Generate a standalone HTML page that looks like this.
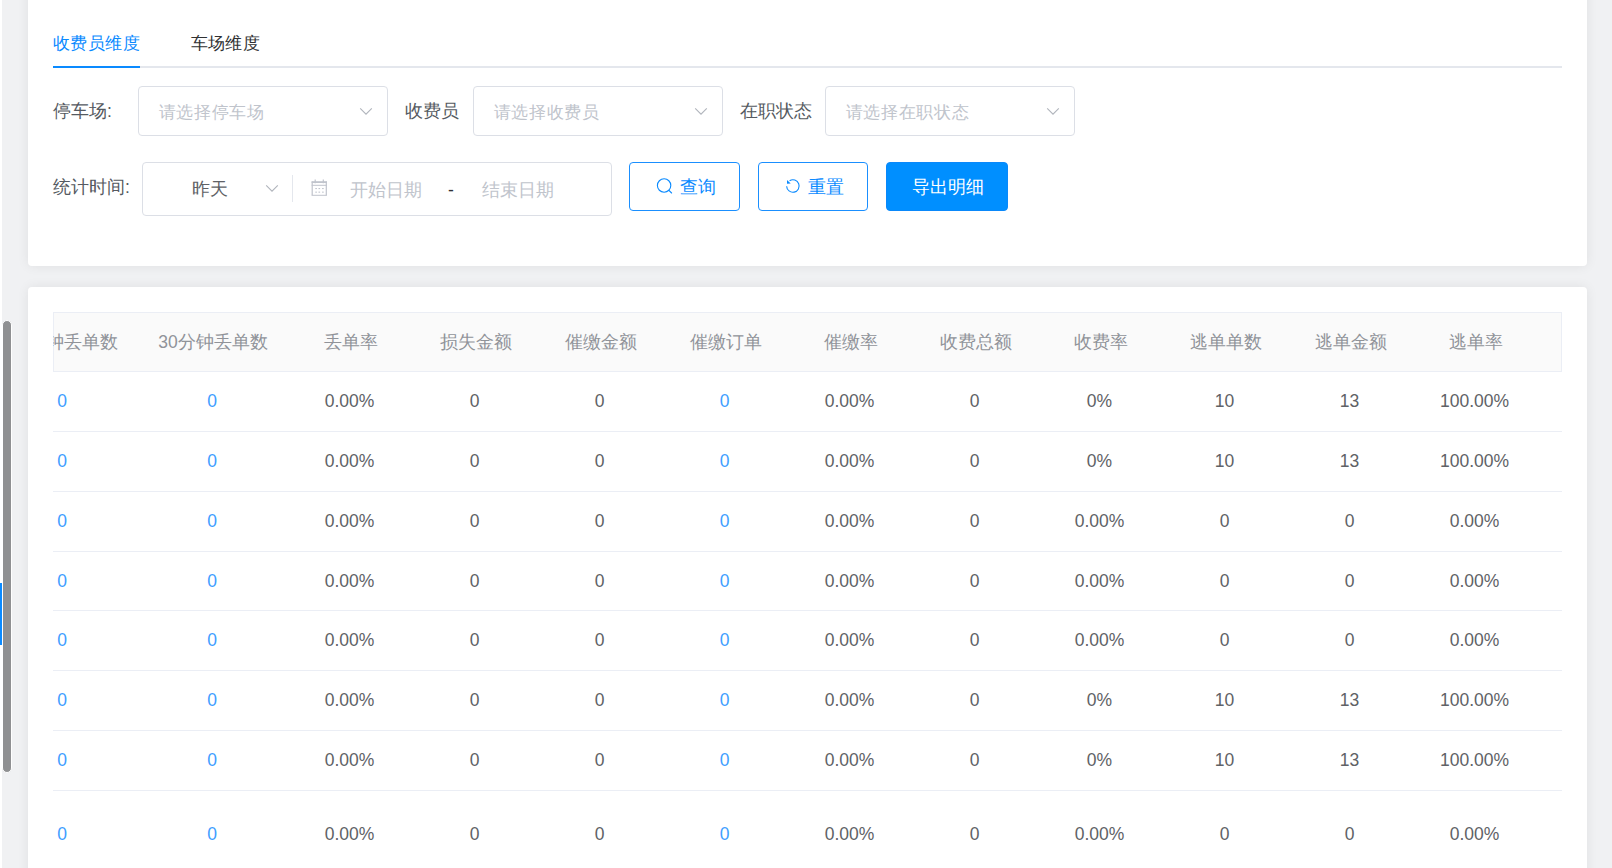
<!DOCTYPE html>
<html><head><meta charset="utf-8">
<style>
*{box-sizing:border-box;margin:0;padding:0}
html,body{width:1612px;height:868px;overflow:hidden;background:#f0f1f3;font-family:"Liberation Sans",sans-serif;font-size:17.5px;color:#606266}
.abs{position:absolute}
.card{position:absolute;left:28px;width:1559px;background:#fff;border-radius:4px;box-shadow:0 0 12px rgba(0,0,0,0.075)}
#c1{top:-20px;height:286px}
#c2{top:287px;height:640px}
.lstrip{position:absolute;left:0;top:0;width:2px;height:868px;background:#fff}
.thumb{position:absolute;left:2px;top:320px;width:10px;height:453px;background:#8f9092;border:1px solid #fff;border-radius:5px}
.bluebar{position:absolute;left:0;top:583px;width:2px;height:62px;background:#0a8aff}
.tab{position:absolute;top:31px;font-size:17.4px;letter-spacing:0.45px;line-height:24px;white-space:nowrap}
.tabline{position:absolute;left:53px;top:66px;width:1509px;height:2px;background:#e4e7ed}
.tabact{position:absolute;left:53px;top:66px;width:87px;height:2px;background:#0a8aff}
.lbl{position:absolute;white-space:nowrap;color:#555a61;line-height:24px;font-size:17.5px}
.sel{position:absolute;top:86px;height:50px;border:1px solid #dcdfe6;border-radius:4px}
.ph{position:absolute;left:19.5px;top:13px;color:#c0c4cc;white-space:nowrap;line-height:24px;font-size:17.4px;letter-spacing:0.7px}
.chev{position:absolute}
.btn{position:absolute;top:162px;height:49px;border:1px solid #1a8fff;border-radius:4px;color:#0a8aff;white-space:nowrap;font-size:17.5px}
.tbl{position:absolute;left:53px;top:312px;width:1509px;height:560px;overflow:hidden}
.hdr{position:absolute;left:0;top:0;width:1509px;height:60px;background:#fafafa;border:1px solid #ebeef5}
.c{position:absolute;text-align:center;white-space:nowrap;line-height:24px;color:#606266}
.h{top:18px;color:#909399;font-size:17.5px}
.ln{position:absolute;left:0;width:1509px;height:1px;background:#ebeef5}
.b{color:#409eff}
</style></head><body>
<div class="lstrip"></div>
<div class="thumb"></div>
<div class="bluebar"></div>
<div class="card" id="c1"></div>
<div class="card" id="c2"></div>

<div class="tab" style="left:53px;color:#0a8aff">收费员维度</div>
<div class="tab" style="left:190.5px;color:#303133">车场维度</div>
<div class="tabline"></div>
<div class="tabact"></div>

<div class="lbl" style="left:53px;top:99px">停车场:</div>
<div class="sel" style="left:138px;width:250px"><span class="ph">请选择停车场</span><svg class="chev" style="left:220px;top:20px" width="14" height="9" viewBox="0 0 14 9"><path d="M1.2 1.4 L7 7.2 L12.8 1.4" fill="none" stroke="#b0b4bc" stroke-width="1.1"/></svg></div>
<div class="lbl" style="left:405px;top:99px">收费员</div>
<div class="sel" style="left:473px;width:250px"><span class="ph">请选择收费员</span><svg class="chev" style="left:220px;top:20px" width="14" height="9" viewBox="0 0 14 9"><path d="M1.2 1.4 L7 7.2 L12.8 1.4" fill="none" stroke="#b0b4bc" stroke-width="1.1"/></svg></div>
<div class="lbl" style="left:740px;top:99px">在职状态</div>
<div class="sel" style="left:825px;width:250px"><span class="ph">请选择在职状态</span><svg class="chev" style="left:220px;top:20px" width="14" height="9" viewBox="0 0 14 9"><path d="M1.2 1.4 L7 7.2 L12.8 1.4" fill="none" stroke="#b0b4bc" stroke-width="1.1"/></svg></div>

<div class="lbl" style="left:53px;top:175px">统计时间:</div>
<div class="sel" style="left:142px;top:162px;width:470px;height:54px">
<span class="abs" style="left:49px;top:14px;color:#606266;line-height:24px;font-size:17.5px">昨天</span>
<svg class="chev" style="left:122px;top:21px" width="14" height="9" viewBox="0 0 14 9"><path d="M1.2 1.4 L7 7.2 L12.8 1.4" fill="none" stroke="#b0b4bc" stroke-width="1.1"/></svg>
<div class="abs" style="left:149px;top:12px;width:1px;height:27px;background:#e4e7ed"></div>
<svg class="abs" style="left:168px;top:16px" width="16" height="17" viewBox="0 0 16 17">
<g fill="none" stroke="#c0c4cc">
<path d="M1.2 2.5 V16.3 M15.3 2.5 V16.3" stroke-width="1.2"/>
<path d="M0.6 16.3 H15.9" stroke-width="1"/>
<path d="M0.6 6.3 H15.9" stroke-width="1"/>
<path d="M4.2 0.5 V4.3 M12.3 0.5 V4.3" stroke-width="1.2"/>
</g>
<rect x="0.6" y="2.2" width="15.3" height="1.8" fill="#c0c4cc"/>
<g fill="#c0c4cc"><rect x="4.3" y="9" width="1.6" height="1.1"/><rect x="7.5" y="9" width="1.6" height="1.1"/><rect x="11.1" y="9" width="1.6" height="1.1"/>
<rect x="4.3" y="12.6" width="1.6" height="1.1"/><rect x="7.5" y="12.6" width="1.6" height="1.1"/><rect x="11.1" y="12.6" width="1.6" height="1.1"/></g>
</svg>
<span class="abs" style="left:207px;top:15px;color:#c0c4cc;line-height:24px;font-size:17.5px">开始日期</span>
<span class="abs" style="left:305px;top:15px;color:#303133;line-height:24px">-</span>
<span class="abs" style="left:339px;top:15px;color:#c0c4cc;line-height:24px;font-size:17.5px">结束日期</span>
</div>

<div class="btn" style="left:629px;width:111px"><svg class="abs" style="left:26px;top:14px" width="18" height="18" viewBox="0 0 18 18"><circle cx="8.1" cy="8.5" r="6.7" fill="none" stroke="#0a8aff" stroke-width="1.1"/><path d="M12.9 13.3 L15.6 16" stroke="#0a8aff" stroke-width="1.1" stroke-linecap="round"/></svg><span class="abs" style="left:50px;top:12px;line-height:24px">查询</span></div>
<div class="btn" style="left:758px;width:110px"><svg class="abs" style="left:26px;top:15px" width="18" height="18" viewBox="0 0 18 18"><path d="M1.65 8.2 A6.25 6.25 0 1 0 4.6 2.7" fill="none" stroke="#0a8aff" stroke-width="1.1"/><path d="M2 2.1 L2 5.8 L5.7 5.5 Z" fill="#0a8aff"/></svg><span class="abs" style="left:49px;top:12px;line-height:24px">重置</span></div>
<div class="btn" style="left:886px;width:122px;background:#008fff;border-color:#0a88fa;color:#fff"><span class="abs" style="left:25px;top:12px;line-height:24px">导出明细</span></div>

<div class="tbl">
<div class="hdr"></div>
<div class="c h" style="left:-65px;width:150px">15分钟丢单数</div>
<div class="c h" style="left:85px;width:150px">30分钟丢单数</div>
<div class="c h" style="left:235px;width:125px">丢单率</div>
<div class="c h" style="left:360px;width:125px">损失金额</div>
<div class="c h" style="left:485px;width:125px">催缴金额</div>
<div class="c h" style="left:610px;width:125px">催缴订单</div>
<div class="c h" style="left:735px;width:125px">催缴率</div>
<div class="c h" style="left:860px;width:125px">收费总额</div>
<div class="c h" style="left:985px;width:125px">收费率</div>
<div class="c h" style="left:1110px;width:125px">逃单单数</div>
<div class="c h" style="left:1235px;width:125px">逃单金额</div>
<div class="c h" style="left:1360px;width:125px">逃单率</div>
<div class="c b" style="left:-66px;width:150px;top:77px">0</div>
<div class="c b" style="left:84px;width:150px;top:77px">0</div>
<div class="c" style="left:234px;width:125px;top:77px">0.00%</div>
<div class="c" style="left:359px;width:125px;top:77px">0</div>
<div class="c" style="left:484px;width:125px;top:77px">0</div>
<div class="c b" style="left:609px;width:125px;top:77px">0</div>
<div class="c" style="left:734px;width:125px;top:77px">0.00%</div>
<div class="c" style="left:859px;width:125px;top:77px">0</div>
<div class="c" style="left:984px;width:125px;top:77px">0%</div>
<div class="c" style="left:1109px;width:125px;top:77px">10</div>
<div class="c" style="left:1234px;width:125px;top:77px">13</div>
<div class="c" style="left:1359px;width:125px;top:77px">100.00%</div>
<div class="c b" style="left:-66px;width:150px;top:137px">0</div>
<div class="c b" style="left:84px;width:150px;top:137px">0</div>
<div class="c" style="left:234px;width:125px;top:137px">0.00%</div>
<div class="c" style="left:359px;width:125px;top:137px">0</div>
<div class="c" style="left:484px;width:125px;top:137px">0</div>
<div class="c b" style="left:609px;width:125px;top:137px">0</div>
<div class="c" style="left:734px;width:125px;top:137px">0.00%</div>
<div class="c" style="left:859px;width:125px;top:137px">0</div>
<div class="c" style="left:984px;width:125px;top:137px">0%</div>
<div class="c" style="left:1109px;width:125px;top:137px">10</div>
<div class="c" style="left:1234px;width:125px;top:137px">13</div>
<div class="c" style="left:1359px;width:125px;top:137px">100.00%</div>
<div class="c b" style="left:-66px;width:150px;top:197px">0</div>
<div class="c b" style="left:84px;width:150px;top:197px">0</div>
<div class="c" style="left:234px;width:125px;top:197px">0.00%</div>
<div class="c" style="left:359px;width:125px;top:197px">0</div>
<div class="c" style="left:484px;width:125px;top:197px">0</div>
<div class="c b" style="left:609px;width:125px;top:197px">0</div>
<div class="c" style="left:734px;width:125px;top:197px">0.00%</div>
<div class="c" style="left:859px;width:125px;top:197px">0</div>
<div class="c" style="left:984px;width:125px;top:197px">0.00%</div>
<div class="c" style="left:1109px;width:125px;top:197px">0</div>
<div class="c" style="left:1234px;width:125px;top:197px">0</div>
<div class="c" style="left:1359px;width:125px;top:197px">0.00%</div>
<div class="c b" style="left:-66px;width:150px;top:257px">0</div>
<div class="c b" style="left:84px;width:150px;top:257px">0</div>
<div class="c" style="left:234px;width:125px;top:257px">0.00%</div>
<div class="c" style="left:359px;width:125px;top:257px">0</div>
<div class="c" style="left:484px;width:125px;top:257px">0</div>
<div class="c b" style="left:609px;width:125px;top:257px">0</div>
<div class="c" style="left:734px;width:125px;top:257px">0.00%</div>
<div class="c" style="left:859px;width:125px;top:257px">0</div>
<div class="c" style="left:984px;width:125px;top:257px">0.00%</div>
<div class="c" style="left:1109px;width:125px;top:257px">0</div>
<div class="c" style="left:1234px;width:125px;top:257px">0</div>
<div class="c" style="left:1359px;width:125px;top:257px">0.00%</div>
<div class="c b" style="left:-66px;width:150px;top:316px">0</div>
<div class="c b" style="left:84px;width:150px;top:316px">0</div>
<div class="c" style="left:234px;width:125px;top:316px">0.00%</div>
<div class="c" style="left:359px;width:125px;top:316px">0</div>
<div class="c" style="left:484px;width:125px;top:316px">0</div>
<div class="c b" style="left:609px;width:125px;top:316px">0</div>
<div class="c" style="left:734px;width:125px;top:316px">0.00%</div>
<div class="c" style="left:859px;width:125px;top:316px">0</div>
<div class="c" style="left:984px;width:125px;top:316px">0.00%</div>
<div class="c" style="left:1109px;width:125px;top:316px">0</div>
<div class="c" style="left:1234px;width:125px;top:316px">0</div>
<div class="c" style="left:1359px;width:125px;top:316px">0.00%</div>
<div class="c b" style="left:-66px;width:150px;top:376px">0</div>
<div class="c b" style="left:84px;width:150px;top:376px">0</div>
<div class="c" style="left:234px;width:125px;top:376px">0.00%</div>
<div class="c" style="left:359px;width:125px;top:376px">0</div>
<div class="c" style="left:484px;width:125px;top:376px">0</div>
<div class="c b" style="left:609px;width:125px;top:376px">0</div>
<div class="c" style="left:734px;width:125px;top:376px">0.00%</div>
<div class="c" style="left:859px;width:125px;top:376px">0</div>
<div class="c" style="left:984px;width:125px;top:376px">0%</div>
<div class="c" style="left:1109px;width:125px;top:376px">10</div>
<div class="c" style="left:1234px;width:125px;top:376px">13</div>
<div class="c" style="left:1359px;width:125px;top:376px">100.00%</div>
<div class="c b" style="left:-66px;width:150px;top:436px">0</div>
<div class="c b" style="left:84px;width:150px;top:436px">0</div>
<div class="c" style="left:234px;width:125px;top:436px">0.00%</div>
<div class="c" style="left:359px;width:125px;top:436px">0</div>
<div class="c" style="left:484px;width:125px;top:436px">0</div>
<div class="c b" style="left:609px;width:125px;top:436px">0</div>
<div class="c" style="left:734px;width:125px;top:436px">0.00%</div>
<div class="c" style="left:859px;width:125px;top:436px">0</div>
<div class="c" style="left:984px;width:125px;top:436px">0%</div>
<div class="c" style="left:1109px;width:125px;top:436px">10</div>
<div class="c" style="left:1234px;width:125px;top:436px">13</div>
<div class="c" style="left:1359px;width:125px;top:436px">100.00%</div>
<div class="c b" style="left:-66px;width:150px;top:510px">0</div>
<div class="c b" style="left:84px;width:150px;top:510px">0</div>
<div class="c" style="left:234px;width:125px;top:510px">0.00%</div>
<div class="c" style="left:359px;width:125px;top:510px">0</div>
<div class="c" style="left:484px;width:125px;top:510px">0</div>
<div class="c b" style="left:609px;width:125px;top:510px">0</div>
<div class="c" style="left:734px;width:125px;top:510px">0.00%</div>
<div class="c" style="left:859px;width:125px;top:510px">0</div>
<div class="c" style="left:984px;width:125px;top:510px">0.00%</div>
<div class="c" style="left:1109px;width:125px;top:510px">0</div>
<div class="c" style="left:1234px;width:125px;top:510px">0</div>
<div class="c" style="left:1359px;width:125px;top:510px">0.00%</div>
<div class="ln" style="top:119px"></div>
<div class="ln" style="top:179px"></div>
<div class="ln" style="top:239px"></div>
<div class="ln" style="top:298px"></div>
<div class="ln" style="top:358px"></div>
<div class="ln" style="top:418px"></div>
<div class="ln" style="top:478px"></div>
</div>
</body></html>
